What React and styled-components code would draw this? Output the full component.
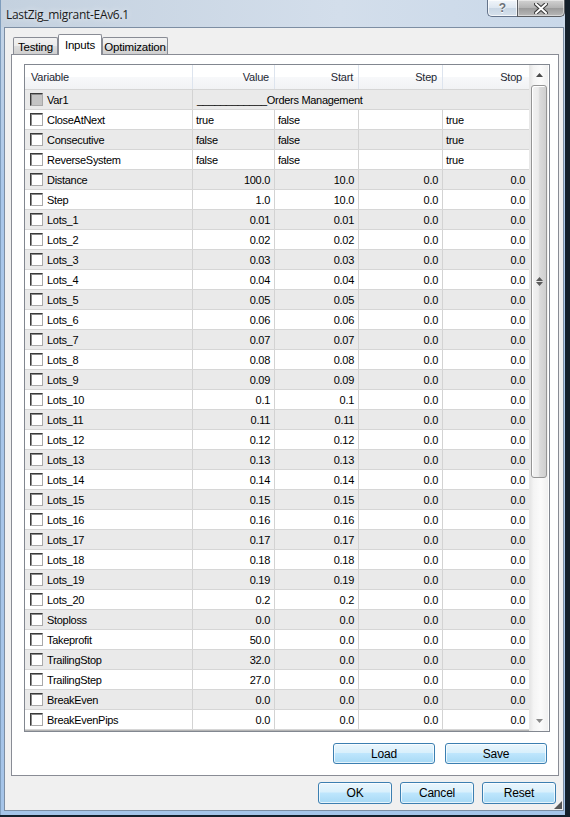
import React from "react";
import styled, { createGlobalStyle } from "styled-components";

const GlobalStyle = createGlobalStyle`
  html, body {
    margin: 0;
    padding: 0;
    background: #14202b;
  }
  body {
    font-family: "Liberation Sans", Arial, sans-serif;
  }
`;

const lots = Array.from({ length: 20 }, (_, i) => {
  const n = i + 1;
  const v = n === 10 ? "0.1" : n === 20 ? "0.2" : (n / 100).toFixed(2);
  return { name: `Lots_${n}`, cells: [v, v, "0.0", "0.0"] };
});

const rows = [
  { name: "Var1", group: "____________Orders Management" },
  { name: "CloseAtNext", text: true, cells: ["true", "false", "", "true"] },
  { name: "Consecutive", text: true, cells: ["false", "false", "", "true"] },
  { name: "ReverseSystem", text: true, cells: ["false", "false", "", "true"] },
  { name: "Distance", cells: ["100.0", "10.0", "0.0", "0.0"] },
  { name: "Step", cells: ["1.0", "10.0", "0.0", "0.0"] },
  ...lots,
  { name: "Stoploss", cells: ["0.0", "0.0", "0.0", "0.0"] },
  { name: "Takeprofit", cells: ["50.0", "0.0", "0.0", "0.0"] },
  { name: "TrailingStop", cells: ["32.0", "0.0", "0.0", "0.0"] },
  { name: "TrailingStep", cells: ["27.0", "0.0", "0.0", "0.0"] },
  { name: "BreakEven", cells: ["0.0", "0.0", "0.0", "0.0"] },
  { name: "BreakEvenPips", cells: ["0.0", "0.0", "0.0", "0.0"] },
];

const COLS = "168px 82px 84px 84px 86px";

export default function App() {
  return (
    <>
      <GlobalStyle />
      <Window>
        <TitleBar>
          <Title>LastZig_migrant-EAv6.1</Title>
          <Caption>
            <HelpBtn>?</HelpBtn>
            <CloseBtn>
              <svg width="14" height="11" viewBox="0 0 14 11">
                <path
                  d="M2 1 L12 10 M12 1 L2 10"
                  stroke="#3a3a3a"
                  strokeWidth="4"
                  strokeLinecap="square"
                />
                <path
                  d="M2 1 L12 10 M12 1 L2 10"
                  stroke="#ffffff"
                  strokeWidth="2"
                  strokeLinecap="square"
                />
              </svg>
            </CloseBtn>
          </Caption>
        </TitleBar>

        <Client>
          <Tabs>
            <Tab $w={45}>Testing</Tab>
            <Tab $w={44} $active>Inputs</Tab>
            <Tab $w={66}>Optimization</Tab>
          </Tabs>

          <Panel>
            <Grid>
              <GridMain>
                <Header>
                  <HeadCell $left>Variable</HeadCell>
                  <HeadCell>Value</HeadCell>
                  <HeadCell>Start</HeadCell>
                  <HeadCell>Step</HeadCell>
                  <HeadCell $last>Stop</HeadCell>
                </Header>
                <Body>
                  {rows.map((r, i) => (
                    <Row key={r.name} $gray={i % 2 === 0}>
                      <NameCell>
                        <Check $disabled={!!r.group} />
                        {r.name}
                      </NameCell>
                      {r.group ? (
                        <GroupCell>{r.group}</GroupCell>
                      ) : (
                        r.cells.map((c, j) => (
                          <Cell key={j} $left={r.text} $last={j === 3}>
                            {c}
                          </Cell>
                        ))
                      )}
                    </Row>
                  ))}
                </Body>
                <BodyEnd />
              </GridMain>
              <ScrollBar>
                <ArrowBtn>
                  <svg width="7" height="4" viewBox="0 0 7 4">
                    <path d="M0 4 L3.5 0 L7 4 Z" fill="#4a4a4a" />
                  </svg>
                </ArrowBtn>
                <Thumb>
                  <svg width="7" height="9" viewBox="0 0 7 9">
                    <path d="M0 4 L3.5 0 L7 4 Z M0 5 L3.5 9 L7 5 Z" fill="#5a5a5a" />
                  </svg>
                </Thumb>
                <Track />
                <ArrowBtn>
                  <svg width="7" height="4" viewBox="0 0 7 4">
                    <path d="M0 0 L3.5 4 L7 0 Z" fill="#8a8a8a" />
                  </svg>
                </ArrowBtn>
              </ScrollBar>
            </Grid>

            <ButtonRow $gap={10} $top={11}>
              <Button $w={102} $h={21}>Load</Button>
              <Button $w={102} $h={21}>Save</Button>
            </ButtonRow>
          </Panel>

          <ButtonRow $gap={8} $top={6}>
            <Button $w={74} $h={22}>OK</Button>
            <Button $w={74} $h={22}>Cancel</Button>
            <Button $w={74} $h={22}>Reset</Button>
          </ButtonRow>

          <Grip>
            <svg width="8" height="8" viewBox="0 0 8 8">
              <path d="M8 0 L8 8 L0 8 Z" fill="#555" />
            </svg>
          </Grip>
        </Client>
      </Window>
    </>
  );
}

const Window = styled.div`
  width: 565px;
  height: 815px;
  box-sizing: border-box;
  display: flex;
  flex-direction: column;
  background: linear-gradient(
    180deg,
    #cad7e5 0px,
    #c3d4e7 27px,
    #a9c7ea 200px,
    #a5c4e8 100%
  );
  border-left: 1px solid #7f9dbd;
`;

const TitleBar = styled.div`
  height: 27px;
  display: flex;
  justify-content: space-between;
  align-items: flex-start;
  background: linear-gradient(90deg, #c4d1df 0%, #d3deeb 60%, #c9d8e9 100%);
`;

const Title = styled.div`
  padding: 6px 0 0 5px;
  font-family: "Open Sans", "Liberation Sans", sans-serif;
  font-size: 12px;
  letter-spacing: -0.3px;
  color: #1b1b1b;
  text-shadow: 0 0 6px rgba(255, 255, 255, 0.9);
`;

const Caption = styled.div`
  display: flex;
  height: 18px;
`;

const HelpBtn = styled.div`
  width: 30px;
  height: 17px;
  box-sizing: border-box;
  display: flex;
  align-items: center;
  justify-content: center;
  border: 1px solid #64738a;
  border-top: none;
  border-right: none;
  border-radius: 0 0 0 5px;
  background: linear-gradient(180deg, #f1f5fa 0%, #dde6f0 50%, #c9d6e4 51%, #d6e1ec 100%);
  box-shadow: inset 0 0 0 1px rgba(255, 255, 255, 0.7);
  font-size: 12px;
  font-weight: bold;
  color: #6b7078;
  text-shadow: 0 1px 0 #fff;
`;

const CloseBtn = styled.div`
  width: 48px;
  height: 17px;
  box-sizing: border-box;
  display: flex;
  align-items: center;
  justify-content: center;
  border: 1px solid #5a5d62;
  border-top: none;
  border-radius: 0 0 5px 0;
  background: linear-gradient(180deg, #d2d2d2 0%, #b3b3b3 50%, #9a9a9a 51%, #b8b8b8 100%);
  box-shadow: inset 0 0 0 1px rgba(255, 255, 255, 0.45);
`;

const Client = styled.div`
  position: relative;
  flex: 1;
  margin: 0 1px 4px 3px;
  padding: 6px 4px 6px 6px;
  display: flex;
  flex-direction: column;
  background: #f0f0f0;
  border: 1px solid #7d8ea3;
`;

const Tabs = styled.div`
  display: flex;
  align-items: flex-end;
  height: 20px;
  padding-left: 2px;
  position: relative;
  z-index: 1;
`;

const Tab = styled.div`
  width: ${(p) => p.$w}px;
  height: ${(p) => (p.$active ? 21 : 17)}px;
  box-sizing: border-box;
  display: flex;
  align-items: center;
  justify-content: center;
  padding-top: ${(p) => (p.$active ? 0 : 1)}px;
  margin-bottom: ${(p) => (p.$active ? -1 : 0)}px;
  border: 1px solid #898c95;
  border-bottom: none;
  border-radius: 2px 2px 0 0;
  background: ${(p) =>
    p.$active
      ? "#ffffff"
      : "linear-gradient(180deg, #f2f2f2 0%, #ebebeb 50%, #dddddd 51%, #cfcfcf 100%)"};
  font-size: 11.5px;
  letter-spacing: -0.2px;
  color: #000;
`;

const Panel = styled.div`
  display: flex;
  flex-direction: column;
  padding: 9px 8px 11px 12px;
  background: #ffffff;
  border: 1px solid #898c95;
`;

const Grid = styled.div`
  display: flex;
  border: 1px solid #828790;
  background: #fff;
`;

const GridMain = styled.div`
  width: 504px;
  display: flex;
  flex-direction: column;
`;

const Header = styled.div`
  display: grid;
  grid-template-columns: ${COLS};
  height: 25px;
  box-sizing: border-box;
  border-bottom: 1px solid #d5d5d5;
  background: linear-gradient(180deg, #ffffff 0%, #ffffff 50%, #f7f8fa 51%, #f1f2f4 100%);
`;

const HeadCell = styled.div`
  display: flex;
  align-items: center;
  justify-content: ${(p) => (p.$left ? "flex-start" : "flex-end")};
  padding: ${(p) => (p.$left ? "0 0 0 6px" : p.$last ? "0 7px 0 0" : "0 5px 0 0")};
  border-right: ${(p) => (p.$last ? "none" : "1px solid #dde4ee")};
  font-size: 11px;
  letter-spacing: -0.2px;
  color: #1e2733;
`;

const Body = styled.div`
  display: flex;
  flex-direction: column;
`;

const BodyEnd = styled.div`
  height: 1px;
  background: #b5b5b5;
`;

const Row = styled.div`
  display: grid;
  grid-template-columns: ${COLS};
  height: 20px;
  box-sizing: border-box;
  border-bottom: 1px solid #d6d6d6;
  background: ${(p) => (p.$gray ? "#eaeaea" : "#ffffff")};
  font-size: 11px;
  letter-spacing: -0.3px;
  color: #000;
`;

const NameCell = styled.div`
  display: flex;
  align-items: center;
  gap: 4px;
  padding-left: 5px;
  border-right: 1px solid #d3d3d3;
  white-space: nowrap;
`;

const Check = styled.span`
  width: 13px;
  height: 13px;
  box-sizing: border-box;
  flex: none;
  border: 1px solid;
  border-color: #3a3a3a #a9a9a9 #a9a9a9 #3a3a3a;
  box-shadow: inset 1px 1px 0 #8a8a8a;
  background: ${(p) => (p.$disabled ? "#c4c4c4" : "#ffffff")};
`;

const Cell = styled.div`
  display: flex;
  align-items: center;
  justify-content: ${(p) => (p.$left ? "flex-start" : "flex-end")};
  padding: ${(p) => (p.$left ? "0 0 0 3px" : "0 4px 0 0")};
  border-right: ${(p) => (p.$last ? "none" : "1px solid #d3d3d3")};
  white-space: nowrap;
`;

const GroupCell = styled.div`
  grid-column: 2 / span 4;
  display: flex;
  align-items: center;
  padding-left: 4px;
  white-space: nowrap;
`;

const ScrollBar = styled.div`
  width: 19px;
  display: flex;
  flex-direction: column;
  background: linear-gradient(90deg, #e6e6e6 0%, #f4f4f4 20%, #fbfbfb 60%, #f0f0f0 100%);
  border-left: 1px solid #e8e8e8;
  box-sizing: border-box;
`;

const ArrowBtn = styled.div`
  height: 20px;
  display: flex;
  align-items: center;
  justify-content: center;
`;

const Thumb = styled.div`
  height: 393px;
  margin: 0 1px;
  box-sizing: border-box;
  display: flex;
  align-items: center;
  justify-content: center;
  border: 1px solid #959595;
  border-radius: 3px;
  background: linear-gradient(90deg, #f2f2f2 0%, #ebebeb 45%, #dbdbdb 55%, #cfcfcf 100%);
  box-shadow: inset 1px 1px 0 #fff;
`;

const Track = styled.div`
  flex: 1;
`;

const ButtonRow = styled.div`
  display: flex;
  justify-content: flex-end;
  gap: ${(p) => p.$gap}px;
  margin-top: ${(p) => p.$top}px;
  padding-right: 3px;
`;

const Button = styled.div`
  width: ${(p) => p.$w}px;
  height: ${(p) => p.$h}px;
  box-sizing: border-box;
  display: flex;
  align-items: center;
  justify-content: center;
  border: 1px solid #3c7fb1;
  border-radius: 3px;
  background: linear-gradient(180deg, #eaf6fd 0%, #d9f0fc 45%, #bee6fd 50%, #a7d9f5 100%);
  box-shadow: inset 0 0 0 1px rgba(255, 255, 255, 0.7);
  font-size: 12px;
  letter-spacing: -0.2px;
  color: #000;
`;

const Grip = styled.div`
  position: absolute;
  right: 1px;
  bottom: 1px;
  width: 8px;
  height: 8px;
  display: flex;
`;
